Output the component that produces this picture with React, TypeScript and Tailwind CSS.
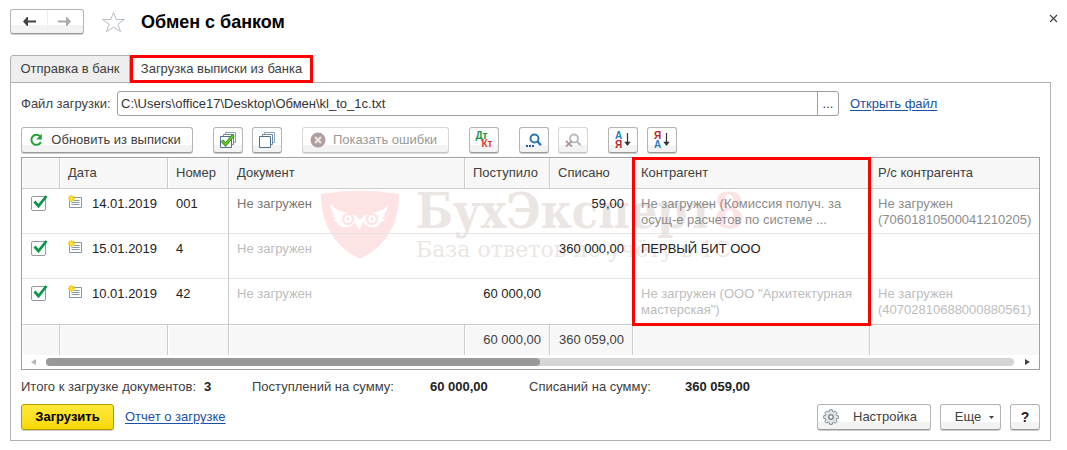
import type { ReactNode } from "react";

type Row = {
	date: string;
	number: string;
	docClass: string;
	received: string;
	spent: string;
	partner: string[];
	partnerClass: string;
	account: string[];
};

const rows: Row[] = [
	{
		date: "14.01.2019",
		number: "001",
		docClass: "text-[#777777]",
		received: "",
		spent: "59,00",
		partner: ["Не загружен (Комиссия получ. за", "осущ-е расчетов по системе ..."],
		partnerClass: "text-[#8c8c8c]",
		account: ["Не загружен", "(70601810500041210205)"],
	},
	{
		date: "15.01.2019",
		number: "4",
		docClass: "text-[#bdbdbd]",
		received: "",
		spent: "360 000,00",
		partner: ["ПЕРВЫЙ БИТ ООО"],
		partnerClass: "text-[#222222]",
		account: [],
	},
	{
		date: "10.01.2019",
		number: "42",
		docClass: "text-[#bdbdbd]",
		received: "60 000,00",
		spent: "",
		partner: ['Не загружен (ООО "Архитектурная', 'мастерская")'],
		partnerClass: "text-[#bdbdbd]",
		account: ["Не загружен", "(40702810688000880561)"],
	},
];

const columns = ["", "Дата", "Номер", "Документ", "Поступило", "Списано", "Контрагент", "Р/с контрагента"];
const totals = ["", "", "", "", "60 000,00", "360 059,00", "", ""];

export default function App() {
	return (
		<div className="bg-white pt-[9px] pr-4 pb-[9px] pl-[10px] font-['Liberation_Sans',Arial,sans-serif] text-[13px] leading-4 text-[#404040]">
			<Header />
			<Tabs />
			<main className="border border-[#b0b0b0] px-[10px] pt-2 pb-[10px]">
				<FileRow />
				<Toolbar />
				<Statement />
				<Summary />
				<Actions />
			</main>
		</div>
	);
}

function Header() {
	return (
		<header className="flex h-[46px] items-start">
			<div className="flex h-[25px] w-[74px] rounded-[3px] border border-[#b4b4b4] border-b-[#999999] bg-linear-to-b from-white from-65% to-[#f3f3f3] to-65% shadow-[0_1px_0_#d0d0d0]">
				<button type="button" aria-label="Назад" className="flex flex-1 items-center justify-center border-r border-[#eeeeee]">
					<Arrow className="text-[#444444]" />
				</button>
				<button type="button" aria-label="Вперед" className="flex flex-1 items-center justify-center">
					<Arrow className="rotate-180 text-[#aaaaaa]" />
				</button>
			</div>
			<button type="button" aria-label="В избранное" className="ml-[17px] pt-[2px]">
				<svg width="25" height="22" viewBox="0 0 25 22" fill="none" stroke="#b3bcc5">
					<path d="M12.5 1.5l2.8 7h8.2l-6.6 4.6 2.7 7.7-7.1-4.7-7.1 4.7 2.7-7.7L1.5 8.5h8.2z" />
				</svg>
			</button>
			<h1 className="ml-[15px] pt-[1px] text-[18px] leading-6 font-bold text-black">Обмен с банком</h1>
			<button type="button" aria-label="Закрыть" className="mt-[5px] mr-[-7px] ml-auto">
				<svg width="9" height="9" viewBox="0 0 9 9" stroke="#444" strokeWidth="1.2">
					<path d="M1 1l7 7M8 1l-7 7" />
				</svg>
			</button>
		</header>
	);
}

function Arrow({ className }: { className: string }) {
	return (
		<svg className={className} width="14" height="11" viewBox="0 0 14 11" fill="none" stroke="currentColor" strokeWidth="2">
			<path d="M2 5.5h12" />
			<path d="M5.5 1L1.5 5.5l4 4.5z" fill="currentColor" strokeWidth="1" />
		</svg>
	);
}

function Tabs() {
	return (
		<div role="tablist" className="-mb-px flex h-7">
			<button
				type="button"
				role="tab"
				aria-selected="false"
				className="w-[120px] rounded-tl-[3px] border border-[#b0b0b0] bg-[#eeeeee] text-[13px]"
			>
				Отправка в банк
			</button>
			<button type="button" role="tab" aria-selected="true" className="w-[183px] border-3 border-[#ff0000] bg-white text-[13px]">
				Загрузка выписки из банка
			</button>
		</div>
	);
}

function FileRow() {
	return (
		<div className="flex h-[25px] items-center">
			<label htmlFor="file" className="w-24 shrink-0">
				Файл загрузки:
			</label>
			<div className="flex h-[25px] max-w-[722px] flex-1 rounded-[3px] border border-[#a0a0a0]">
				<input
					id="file"
					type="text"
					defaultValue="C:\Users\office17\Desktop\Обмен\kl_to_1c.txt"
					className="min-w-0 flex-1 bg-transparent px-[3px] text-[13px] text-[#333333] outline-none"
				/>
				<button type="button" aria-label="Выбрать файл" className="w-[21px] border-l border-[#a0a0a0] text-[#333333]">
					...
				</button>
			</div>
			<TextLink className="ml-[11px]">Открыть файл</TextLink>
		</div>
	);
}

function TextLink({ children, className = "" }: { children: ReactNode; className?: string }) {
	return (
		<a href="#" className={`text-[#1a50a6] underline underline-offset-2 ${className}`}>
			{children}
		</a>
	);
}

function ToolButton({
	children,
	label,
	className = "w-[30px]",
	disabled = false,
}: {
	children: ReactNode;
	label?: string;
	className?: string;
	disabled?: boolean;
}) {
	return (
		<button
			type="button"
			aria-label={label}
			disabled={disabled}
			className={`flex h-[26px] shrink-0 items-center justify-center rounded-[3px] border bg-linear-to-b from-white from-70% to-[#f3f3f3] to-70% ${
				disabled
					? "border-[#d6d6d6] border-b-[#c4c4c4] text-[#999999] shadow-[0_1px_0_#dddddd]"
					: "border-[#b4b4b4] border-b-[#999999] shadow-[0_1px_0_#cccccc]"
			} ${className}`}
		>
			{children}
		</button>
	);
}

function Toolbar() {
	return (
		<div className="mt-[11px] mb-1 flex gap-5">
			<ToolButton className="w-[172px] gap-2 pr-1">
				<svg width="14" height="14" viewBox="0 0 14 14" fill="none">
					<path d="M11 3.4A5 5 0 1 0 11.9 9" stroke="#23a238" strokeWidth="2" />
					<path d="M12.8 0.8v5.6H7.2z" fill="#23a238" />
				</svg>
				Обновить из выписки
			</ToolButton>
			<div className="flex gap-[9px]">
				<ToolButton label="Установить флажки">
					<Sheets checked />
				</ToolButton>
				<ToolButton label="Снять флажки">
					<Sheets />
				</ToolButton>
			</div>
			<ToolButton className="w-[147px] gap-[7px] pr-1" disabled>
				<svg width="16" height="16" viewBox="0 0 16 16">
					<circle cx="8" cy="8" r="7.5" fill="#b09e9e" />
					<path d="M5 5l6 6M11 5l-6 6" stroke="#e9e4e4" strokeWidth="2.4" />
				</svg>
				Показать ошибки
			</ToolButton>
			<ToolButton label="Дт Кт">
				<span className="flex w-[17px] flex-col text-[10px] leading-2 font-bold">
					<span className="self-start text-[#139447]">Дт</span>
					<span className="self-end text-[#e03c3c]">Кт</span>
				</span>
			</ToolButton>
			<div className="flex gap-[9px]">
				<ToolButton label="Найти">
					<svg width="16" height="15" viewBox="0 0 16 15" fill="none">
						<circle cx="8.5" cy="5.5" r="4" stroke="#2a76b0" strokeWidth="2" />
						<path d="M11.5 8.5l3.5 3.8" stroke="#2a76b0" strokeWidth="2.4" />
						<path d="M0 13h2M3 13h2M6 13h2" stroke="#245f93" strokeWidth="2" />
					</svg>
				</ToolButton>
				<ToolButton label="Отменить поиск" disabled>
					<svg width="16" height="15" viewBox="0 0 16 15" fill="none">
						<circle cx="9" cy="5.5" r="4" stroke="#b6bdc3" strokeWidth="2" />
						<path d="M12 8.5l3.5 3.8" stroke="#b6bdc3" strokeWidth="2.4" />
						<path d="M1 8l6 5.5M7 8l-6 5.5" stroke="#b49b9b" strokeWidth="2" />
					</svg>
				</ToolButton>
			</div>
			<div className="flex gap-[9px]">
				<ToolButton label="Сортировать по возрастанию">
					<SortIcon up="А" down="Я" upClass="text-[#2b7fc0]" downClass="text-[#b8252d]" />
				</ToolButton>
				<ToolButton label="Сортировать по убыванию">
					<SortIcon up="Я" down="А" upClass="text-[#b8252d]" downClass="text-[#2b7fc0]" />
				</ToolButton>
			</div>
		</div>
	);
}

function Sheets({ checked = false }: { checked?: boolean }) {
	return (
		<svg width="16" height="16" viewBox="0 0 16 16" fill="white" stroke="#52728c">
			<path d="M5.5 0.5h10v10h-10z" stroke="#8ba0b1" />
			<path d="M3.5 2.5h10v10h-10z" stroke="#7089a0" />
			<path d="M0.5 4.5h11v11h-11z" />
			{checked && (
				<>
					<path d="M2 8.5l3.5 4L13.5 3" fill="none" stroke="#2c8a12" strokeWidth="3.4" />
					<path d="M2.5 9l3 3.4L13 3.6" fill="none" stroke="#6cc832" strokeWidth="1.8" />
				</>
			)}
		</svg>
	);
}

function SortIcon({ up, down, upClass, downClass }: { up: string; down: string; upClass: string; downClass: string }) {
	return (
		<span className="flex items-center gap-[2px]">
			<span className="flex flex-col text-[10px] leading-[9px] font-bold">
				<span className={upClass}>{up}</span>
				<span className={downClass}>{down}</span>
			</span>
			<svg width="7" height="14" viewBox="0 0 7 14" fill="none" stroke="#333">
				<path d="M3.5 0v12" strokeWidth="1.2" />
				<path d="M0.8 9l2.7 3.5L6.2 9z" fill="#333" strokeWidth="0.6" />
			</svg>
		</span>
	);
}

function Statement() {
	return (
		<section className="relative border border-[#a0a0a0]">
			<Watermark />
			<table className="relative w-full table-fixed border-separate border-spacing-0 text-left">
				<colgroup>
					<col className="w-[37px]" />
					<col className="w-[108px]" />
					<col className="w-[61px]" />
					<col />
					<col className="w-[85px]" />
					<col className="w-[83px]" />
					<col className="w-[237px]" />
					<col className="w-[170px]" />
				</colgroup>
				<thead>
					<tr className="h-[31px]">
						{columns.map((name, i) => (
							<th
								key={i}
								scope="col"
								className="border-b border-l border-[#cccccc] bg-[#f7f7f7] px-2 py-0 font-normal whitespace-nowrap shadow-[inset_1px_1px_0_#ffffff] first:border-l-0"
							>
								{name}
							</th>
						))}
					</tr>
				</thead>
				<tbody>
					{rows.map((row) => (
						<StatementRow key={row.date} row={row} />
					))}
				</tbody>
				<tfoot>
					<tr className="h-[31px]">
						{totals.map((value, i) => (
							<td
								key={i}
								className="border-t border-l border-[#cccccc] bg-[#f7f7f7] px-2 py-0 text-right whitespace-nowrap shadow-[inset_1px_1px_0_#ffffff] first:border-l-0"
							>
								{value}
							</td>
						))}
					</tr>
				</tfoot>
			</table>
			<Scrollbar />
			{/* highlight around the counterparty column */}
			<div className="pointer-events-none absolute -top-px right-[168px] h-[169px] w-[239px] border-3 border-[#ff0000]" />
		</section>
	);
}

function StatementRow({ row }: { row: Row }) {
	return (
		<tr className="h-[45px] text-[#222222] [&:not(:last-child)>td]:border-b [&>td]:border-b-[#e4e4e4] [&>td]:pt-[7px] [&>td]:align-top">
			<td className="pl-[9px]">
				<label className="relative block size-4">
					<input
						type="checkbox"
						defaultChecked
						aria-label={`Загрузить ${row.date}`}
						className="peer block size-[15px] appearance-none rounded-[2px] border border-[#999999] bg-white"
					/>
					<svg className="absolute -top-px left-[2px] hidden peer-checked:block" width="15" height="14" viewBox="0 0 15 14" fill="none">
						<path d="M1.5 6.5l4 4.5L13.5 1" stroke="#0a9748" strokeWidth="2.8" />
					</svg>
				</label>
			</td>
			<td className="pl-[9px]">
				<span className="flex gap-[10px]">
					<svg className="-mt-px" width="14" height="14" viewBox="0 0 14 14" fill="none">
						<path d="M1.5 2.5h12v10h-12z" fill="white" stroke="#8496a8" />
						<path d="M6 5.5h5.5M3.5 7.5h8M3.5 9.5h8" stroke="#8496a8" />
						<path d="M3.5 0v7M0 3.5h7M1 1l5 5M6 1L1 6" stroke="#f7d20c" strokeWidth="1.6" />
						<circle cx="3.5" cy="3.5" r="1" fill="#fff3a0" />
					</svg>
					{row.date}
				</span>
			</td>
			<td className="pl-[9px]">{row.number}</td>
			<td className={`border-l border-l-[#cccccc] px-2 ${row.docClass}`}>Не загружен</td>
			<td className="pr-2 text-right">{row.received}</td>
			<td className="pr-2 text-right">{row.spent}</td>
			<td className={`pl-[9px] whitespace-nowrap ${row.partnerClass}`}>
				{row.partner.map((line) => (
					<div key={line}>{line}</div>
				))}
			</td>
			<td className={`pl-[9px] whitespace-nowrap ${row.partnerClass}`}>
				{row.account.map((line) => (
					<div key={line}>{line}</div>
				))}
			</td>
		</tr>
	);
}

function Watermark() {
	return (
		<div className="pointer-events-none absolute top-8 left-[299px] flex gap-[17px] whitespace-nowrap text-[#ebe6e4]">
			<svg width="78" height="70" viewBox="0 0 78 70" fill="none">
				<path d="M0 4Q39-3 78 4C78 34 65 56 39 69C13 56 0 34 0 4z" fill="#fde3e3" />
				<path d="M11 15c5 8 17 6 24 11l4 4 4-4c7-5 19-3 24-11-1 6-3 8-5 10l3 1-4 2 3 2-4 2c-2 4-5 6-9 5-4 0-7-2-9-5l-4 8-4-8c-2 3-5 5-9 5-4 1-7-1-9-5l-4-2 3-2-4-2 3-1c-2-2-4-4-5-10z" fill="white" />
				<circle cx="27" cy="29" r="5" fill="white" stroke="#fde3e3" strokeWidth="2.4" />
				<circle cx="51" cy="29" r="5" fill="white" stroke="#fde3e3" strokeWidth="2.4" />
				<circle cx="27" cy="29" r="1.8" fill="#fde3e3" />
				<circle cx="51" cy="29" r="1.8" fill="#fde3e3" />
			</svg>
			<div>
				<div className="font-['DejaVu_Serif_Condensed','DejaVu_Serif',serif] text-[48px] leading-[42px] font-bold">
					БухЭксперт<span className="text-[#fde3e3]">8</span>
				</div>
				<div className="mt-2 font-['DejaVu_Serif',serif] text-[22px] leading-5">База ответов по учёту в 1С</div>
			</div>
		</div>
	);
}

function Scrollbar() {
	return (
		<div className="flex h-[14px] items-center justify-between px-[9px]">
			<svg width="5" height="6" viewBox="0 0 5 6" fill="#b5b5b5">
				<path d="M5 0v6L0 3z" />
			</svg>
			<div className="mr-[11px] ml-[10px] h-2 flex-1 rounded-full bg-[#d5d5d5]">
				<div className="h-2 w-[51%] rounded-full bg-[#999999]" />
			</div>
			<svg width="5" height="6" viewBox="0 0 5 6" fill="#444">
				<path d="M0 0v6l5-3z" />
			</svg>
		</div>
	);
}

function Summary() {
	return (
		<div className="mt-[9px] flex whitespace-nowrap">
			<div className="flex w-[231px] gap-2">
				Итого к загрузке документов: <b className="text-[#222222]">3</b>
			</div>
			<div className="flex w-[277px]">
				<span className="w-[178px]">Поступлений на сумму:</span>
				<b className="text-[#222222]">60 000,00</b>
			</div>
			<div className="flex">
				<span className="w-[156px]">Списаний на сумму:</span>
				<b className="text-[#222222]">360 059,00</b>
			</div>
		</div>
	);
}

function Actions() {
	return (
		<div className="mt-[9px] flex items-center">
			<button
				type="button"
				className="h-[26px] w-[93px] rounded-[3px] border border-[#b39b00] bg-linear-to-b from-[#ffe838] to-[#f9d900] font-bold text-black shadow-[0_1px_0_#cccccc]"
			>
				Загрузить
			</button>
			<TextLink className="ml-[11px]">Отчет о загрузке</TextLink>
			<div className="ml-auto flex gap-[9px]">
				<ToolButton className="w-[114px] gap-[14px] pr-2">
					<svg width="16" height="16" viewBox="0 0 16 16" fill="none" stroke="#858c93">
						<path
							d="M6.7.7h2.6l.4 1.9 1 .4 1.6-1 1.8 1.8-1 1.6.4 1 1.8.4v2.6l-1.8.4-.4 1 1 1.6-1.8 1.8-1.6-1-1 .4-.4 1.8H6.7l-.4-1.8-1-.4-1.6 1-1.8-1.8 1-1.6-.4-1L.7 9.3V6.7l1.8-.4.4-1-1-1.6 1.8-1.8 1.6 1 1-.4z"
							fill="#e2e6e9"
						/>
						<circle cx="8" cy="8" r="2.2" fill="white" strokeWidth="1.5" />
					</svg>
					Настройка
				</ToolButton>
				<ToolButton className="w-[61px] gap-2 pl-2">
					Еще
					<svg width="5" height="3" viewBox="0 0 5 3" fill="#444">
						<path d="M0 0h5L2.5 3z" />
					</svg>
				</ToolButton>
				<ToolButton label="Справка" className="w-[30px] text-[14px] font-bold text-[#222222]">
					?
				</ToolButton>
			</div>
		</div>
	);
}
